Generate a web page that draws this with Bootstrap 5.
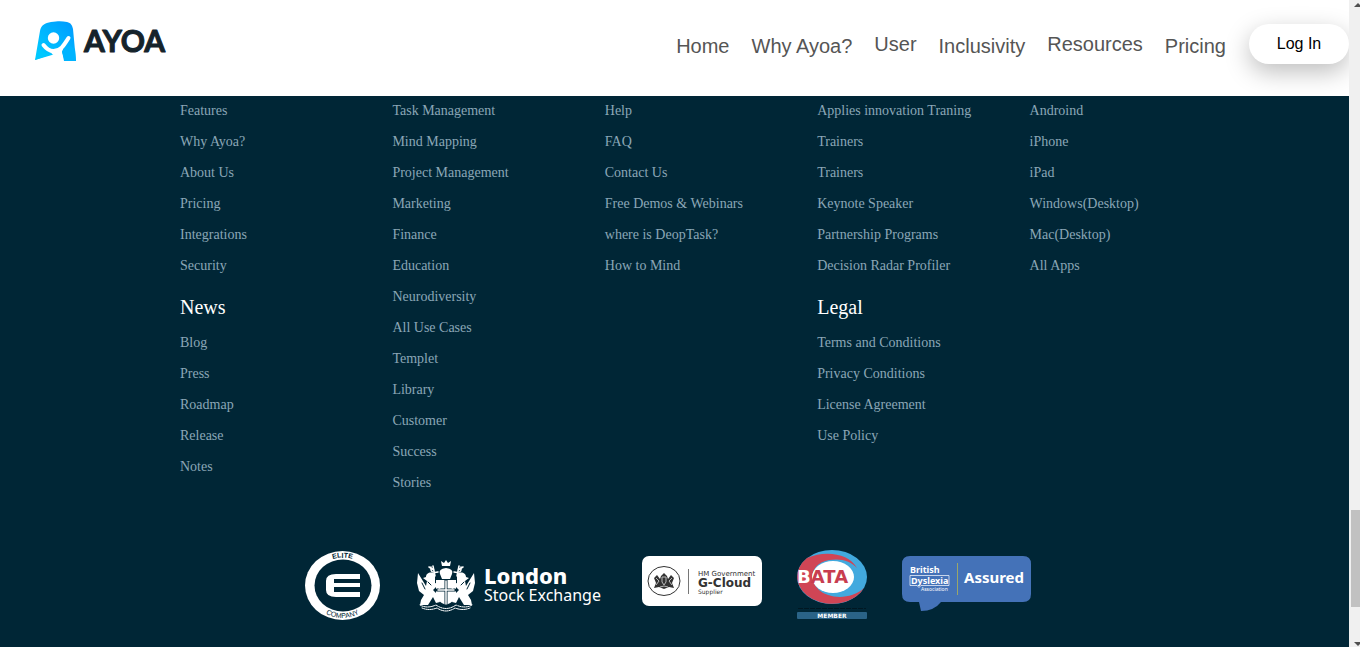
<!DOCTYPE html>
<html lang="en">
<head>
<meta charset="utf-8">
<meta name="viewport" content="width=device-width, initial-scale=1">
<title>Ayoa</title>
<link href="https://cdn.jsdelivr.net/npm/bootstrap@5.3.0/dist/css/bootstrap.min.css" rel="stylesheet">
<style>
  body { font-family: "Liberation Serif", serif; background: #002636; }
  .site-header { background: #fff; padding: 24px 0 32px 35px; font-family: "Liberation Sans", sans-serif; }
  .site-header .brand-link { height: 46px; margin: -3px 0; }
  .main-nav { gap: 22px; }
  .main-nav a { color: #555; font-size: 20px; line-height: 24px; padding-top: 4px; }
  .main-nav a.has-menu { padding-top: 0; }
  .login-btn { width: 100px; height: 40px; margin-left: 1px; border: 0; border-radius: 20px; background: #fff; color: #000; font-size: 16px; box-shadow: 0 8px 24px rgba(0,0,0,.26); }
  .site-footer { background: #002636; padding-top: 4px; }
  .link-columns { padding: 0 107px 0 180px; }
  .link-columns li { font-size: 14px; line-height: 21px; margin-bottom: 10px; }
  .link-columns a { color: #8ba6b6; }
  .link-columns h2 { color: #fff; font-size: 20px; line-height: 24px; font-weight: 400; margin: 19px 0 13px; }
  .award-row { gap: 35px; padding: 46px 13px 26px 0; }
  .scroll-rail { width: 11px; background: #f0f0f0; }
  .scroll-thumb { height: 97px; margin: 0 0 31px 2px; background: #c1c1c1; }
  .scroll-rail svg { display: block; }
</style>
</head>
<body>
<div class="d-flex min-vh-100">
  <div class="flex-grow-1 d-flex flex-column">
    <header class="site-header d-flex justify-content-between align-items-center overflow-hidden">
      <a class="brand-link" href="#" aria-label="Ayoa">
        <svg width="134" height="46" viewBox="0 0 134 46">
          <defs><linearGradient id="sky" x1="0" y1="1" x2="1" y2="0"><stop offset="0" stop-color="#00d0ff"/><stop offset=".55" stop-color="#00b2ff"/><stop offset="1" stop-color="#0098ff"/></linearGradient></defs>
          <path d="M0 39 5 10C6 4 10 2 16 1c7-1 11-1 16 0 4 1 5 3 6 7l3 32H29l-2-9Z" fill="url(#sky)"/>
          <circle cx="18.500" cy="17" r="5.700" fill="#fff"/>
          <path d="M8.500 24c3 4 6 6 10 6 7 0 10-5 15-13" fill="none" stroke="#fff" stroke-width="4" stroke-linecap="round"/>
          <path d="M14 28h14l-1 4 3 8h-3l-10-7Z" fill="#fff"/>
          <path d="m0 39 5-10c4 3 7 4 12 4Z" fill="#00c8ff"/>
          <path d="M27 30 29 40h12l-1-12-5-3Z" fill="#00b4ff"/>
          <text x="49" y="31" font-family="Lato, sans-serif" font-weight="700" font-size="30" fill="#15232b" stroke="#15232b" stroke-width="1" stroke-linejoin="round">AYOA</text>
        </svg>
      </a>
      <nav class="main-nav d-flex align-items-center" aria-label="Main">
        <a class="text-decoration-none" href="#">Home</a>
        <a class="text-decoration-none" href="#">Why Ayoa?</a>
        <a class="text-decoration-none has-menu" href="#">User</a>
        <a class="text-decoration-none" href="#">Inclusivity</a>
        <a class="text-decoration-none has-menu" href="#">Resources</a>
        <a class="text-decoration-none" href="#">Pricing</a>
        <button class="login-btn" type="button">Log In</button>
      </nav>
    </header>

    <footer class="site-footer flex-grow-1">
      <div class="link-columns"><div class="row row-cols-5 g-0">
        <div class="col">
          <ul class="list-unstyled mb-0">
            <li><a class="text-decoration-none" href="#">Features</a></li>
            <li><a class="text-decoration-none" href="#">Why Ayoa?</a></li>
            <li><a class="text-decoration-none" href="#">About Us</a></li>
            <li><a class="text-decoration-none" href="#">Pricing</a></li>
            <li><a class="text-decoration-none" href="#">Integrations</a></li>
            <li><a class="text-decoration-none" href="#">Security</a></li>
          </ul>
          <h2>News</h2>
          <ul class="list-unstyled mb-0">
            <li><a class="text-decoration-none" href="#">Blog</a></li>
            <li><a class="text-decoration-none" href="#">Press</a></li>
            <li><a class="text-decoration-none" href="#">Roadmap</a></li>
            <li><a class="text-decoration-none" href="#">Release</a></li>
            <li><a class="text-decoration-none" href="#">Notes</a></li>
          </ul>
        </div>
        <div class="col">
          <ul class="list-unstyled mb-0">
            <li><a class="text-decoration-none" href="#">Task Management</a></li>
            <li><a class="text-decoration-none" href="#">Mind Mapping</a></li>
            <li><a class="text-decoration-none" href="#">Project Management</a></li>
            <li><a class="text-decoration-none" href="#">Marketing</a></li>
            <li><a class="text-decoration-none" href="#">Finance</a></li>
            <li><a class="text-decoration-none" href="#">Education</a></li>
            <li><a class="text-decoration-none" href="#">Neurodiversity</a></li>
            <li><a class="text-decoration-none" href="#">All Use Cases</a></li>
            <li><a class="text-decoration-none" href="#">Templet</a></li>
            <li><a class="text-decoration-none" href="#">Library</a></li>
            <li><a class="text-decoration-none" href="#">Customer</a></li>
            <li><a class="text-decoration-none" href="#">Success</a></li>
            <li><a class="text-decoration-none" href="#">Stories</a></li>
          </ul>
        </div>
        <div class="col">
          <ul class="list-unstyled mb-0">
            <li><a class="text-decoration-none" href="#">Help</a></li>
            <li><a class="text-decoration-none" href="#">FAQ</a></li>
            <li><a class="text-decoration-none" href="#">Contact Us</a></li>
            <li><a class="text-decoration-none" href="#">Free Demos &amp; Webinars</a></li>
            <li><a class="text-decoration-none" href="#">where is DeopTask?</a></li>
            <li><a class="text-decoration-none" href="#">How to Mind</a></li>
          </ul>
        </div>
        <div class="col">
          <ul class="list-unstyled mb-0">
            <li><a class="text-decoration-none" href="#">Applies innovation Traning</a></li>
            <li><a class="text-decoration-none" href="#">Trainers</a></li>
            <li><a class="text-decoration-none" href="#">Trainers</a></li>
            <li><a class="text-decoration-none" href="#">Keynote Speaker</a></li>
            <li><a class="text-decoration-none" href="#">Partnership Programs</a></li>
            <li><a class="text-decoration-none" href="#">Decision Radar Profiler</a></li>
          </ul>
          <h2>Legal</h2>
          <ul class="list-unstyled mb-0">
            <li><a class="text-decoration-none" href="#">Terms and Conditions</a></li>
            <li><a class="text-decoration-none" href="#">Privacy Conditions</a></li>
            <li><a class="text-decoration-none" href="#">License Agreement</a></li>
            <li><a class="text-decoration-none" href="#">Use Policy</a></li>
          </ul>
        </div>
        <div class="col">
          <ul class="list-unstyled mb-0">
            <li><a class="text-decoration-none" href="#">Androind</a></li>
            <li><a class="text-decoration-none" href="#">iPhone</a></li>
            <li><a class="text-decoration-none" href="#">iPad</a></li>
            <li><a class="text-decoration-none" href="#">Windows(Desktop)</a></li>
            <li><a class="text-decoration-none" href="#">Mac(Desktop)</a></li>
            <li><a class="text-decoration-none" href="#">All Apps</a></li>
          </ul>
        </div>
      </div></div>

      <div class="award-row d-flex justify-content-center align-items-center">
        <!-- Elite Company -->
        <svg width="75" height="72" viewBox="0 0 75 72">
          <ellipse cx="37.500" cy="36.500" rx="37.500" ry="34.500" fill="#fff"/>
          <ellipse cx="38" cy="36.500" rx="28.500" ry="26" fill="#002636"/>
          <path id="arcTop" d="M7 38A30 29 0 0 1 68 38" fill="none"/>
          <path id="arcBottom" d="M4 36A33.500 33 0 0 0 71 36" fill="none"/>
          <text font-family="Liberation Sans, sans-serif" font-size="7" font-weight="700" fill="#002636" text-anchor="middle"><textPath href="#arcTop" startOffset="50%">ELITE</textPath></text>
          <text font-family="Liberation Sans, sans-serif" font-size="7" fill="#002636" text-anchor="middle"><textPath href="#arcBottom" startOffset="50%">COMPANY</textPath></text>
          <path d="M55 25H31q-10 0-10 7v9q0 7 10 7h24v-5H29v-5h26v-4H29v-4h26Z" fill="#fff"/>
        </svg>
        <!-- London Stock Exchange -->
        <svg width="192" height="72" viewBox="0 0 192 72">
          <g fill="#fff" stroke="#fff" stroke-linejoin="round" stroke-linecap="round">
            <path d="M21 31h20v14q-1 8-10 11-9-3-10-11Z" stroke="none"/>
            <path d="M31 31v25M22 41h18" stroke="#002636" stroke-width="3"/>
            <path d="M31 32v23M23 41h16" stroke-width="1.500"/>
            <path d="M25 25q-2-5 6-6 8 1 6 6l-2 5h-8ZM27 17l-1-5 3 2 2-3 2 3 3-2-1 5Z" stroke="none"/>
            <path d="M20 25c-4-3-9-1-9 3l-3 1 4 3-1 5-8-13-1 10 2 8 5 4-3 5-1 5h8l5-8 3 6 4-1-2-7-5-5 3-3 4 2 2-4-7-2Z" stroke="none"/>
            <path d="M42 25c4-3 9-1 9 3l3 1-4 3 1 5 8-13 1 10-2 8-5 4 3 5 1 5h-8l-5-8-3 6-4-1 2-7 5-5-3-3-4 2-2-4 7-2Z" stroke="none"/>
            <path d="m13 33 3 3m-9-2 3 6m39-7-3 3m9-2-3 6" stroke="#002636" stroke-width="1"/>
            <path d="M23 23q-8 2-7-5m3 3-5-3m25 5q8 2 7-5m-3 3 5-3M20 27l-2-10m24 10 2-10" fill="none" stroke-width="1.500"/>
            <path d="M5 56q7 4 16 0 10 7 20 0 9 4 16 0M7 59q7 3 15 0 9 6 18 0 8 3 15 0" fill="none" stroke-width="1" stroke-dasharray="3 1"/>
          </g>
          <g fill="#fff" font-family="'Noto Sans', sans-serif">
            <text x="69" y="35" font-size="22" font-weight="800">London</text>
            <text x="69" y="52" font-size="16">Stock Exchange</text>
          </g>
        </svg>
        <!-- G-Cloud Supplier -->
        <svg width="120" height="72" viewBox="0 0 120 72">
          <rect y="7" width="120" height="50" rx="7" fill="#fff"/>
          <ellipse cx="22" cy="32" rx="16" ry="14.500" fill="none" stroke="#333"/>
          <path d="m12 29 3-3 3 4 1-3 3-3 3 3 1 3 3-4 3 3-2 5 2 5-5-1-5 2-5-2-5 1 2-5Z" fill="#333"/>
          <path d="m14 29 3 3-3 4m16-7-3 3 3 4M20 28h4v5l-2 3-2-3ZM18 38l4-1 4 1" fill="none" stroke="#bbb"/>
          <path d="M46.500 20v25" stroke="#777"/>
          <g fill="#333" font-family="'DejaVu Sans', sans-serif">
            <text x="56" y="27" font-size="7">HM Government</text>
            <text x="56" y="38" font-size="12" font-weight="700">G-Cloud</text>
            <text x="56" y="45" font-size="6">Supplier</text>
          </g>
        </svg>
        <!-- BATA Member -->
        <svg width="70" height="72" viewBox="0 0 70 72">
          <ellipse cx="35" cy="28" rx="35" ry="27" fill="#42a9de"/>
          <path d="M60 19C52 4 28 1 10 9A35 27 0 1 0 67 39C54 51 32 50 22 41 10 30 15 14 32 11 44 9 54 12 60 19Z" fill="#d04555"/>
          <ellipse cx="36" cy="28" rx="21" ry="16" fill="#fff"/>
          <text x="0" y="34" font-family="'DejaVu Sans', sans-serif" font-size="18" font-weight="700" fill="#fff">B<tspan fill="#c83d50">ATA</tspan></text>
          <path d="M1 59.500h68" stroke="#001722" stroke-dasharray="5 1"/>
          <rect y="63" width="70" height="7" rx="1" fill="#2a6387"/>
          <text x="35" y="69" font-family="'DejaVu Sans', sans-serif" font-size="6" font-weight="700" fill="#fff" text-anchor="middle">MEMBER</text>
        </svg>
        <!-- British Dyslexia Association -->
        <svg width="129" height="72" viewBox="0 0 129 72">
          <path d="M8 7h113q8 0 8 8v30q0 8-8 8H39q-7 9-20 9l-2-9H8q-8 0-8-8V15q0-8 8-8Z" fill="#4472b8"/>
          <path d="M55.500 14v32" stroke="#9aa66a"/>
          <path d="M8 26.500h39v10H19l-2 2-2-2H8Z" fill="none" stroke="#fff" stroke-width=".7"/>
          <g fill="#fff" font-family="'Noto Sans', sans-serif">
            <text x="8" y="24" font-size="9" font-weight="700">British</text>
            <text x="9" y="35" font-size="9" font-weight="700">Dyslexia</text>
            <text x="19" y="42" font-size="5">Association</text>
            <text x="62" y="34" font-size="15" font-weight="700">Assured</text>
          </g>
        </svg>
      </div>
    </footer>
  </div>

  <div class="scroll-rail flex-shrink-0 d-flex flex-column" aria-hidden="true">
    <svg class="mb-auto" width="11" height="9" viewBox="0 0 11 9"><path d="m5 7 4-4 4 4Z" fill="#505050"/></svg>
    <div class="scroll-thumb"></div>
    <svg width="11" height="9" viewBox="0 0 11 9"><path d="m5 4 4 4 4-4Z" fill="#505050"/></svg>
  </div>
</div>
<script src="https://cdn.jsdelivr.net/npm/bootstrap@5.3.0/dist/js/bootstrap.bundle.min.js"></script>
</body>
</html>
